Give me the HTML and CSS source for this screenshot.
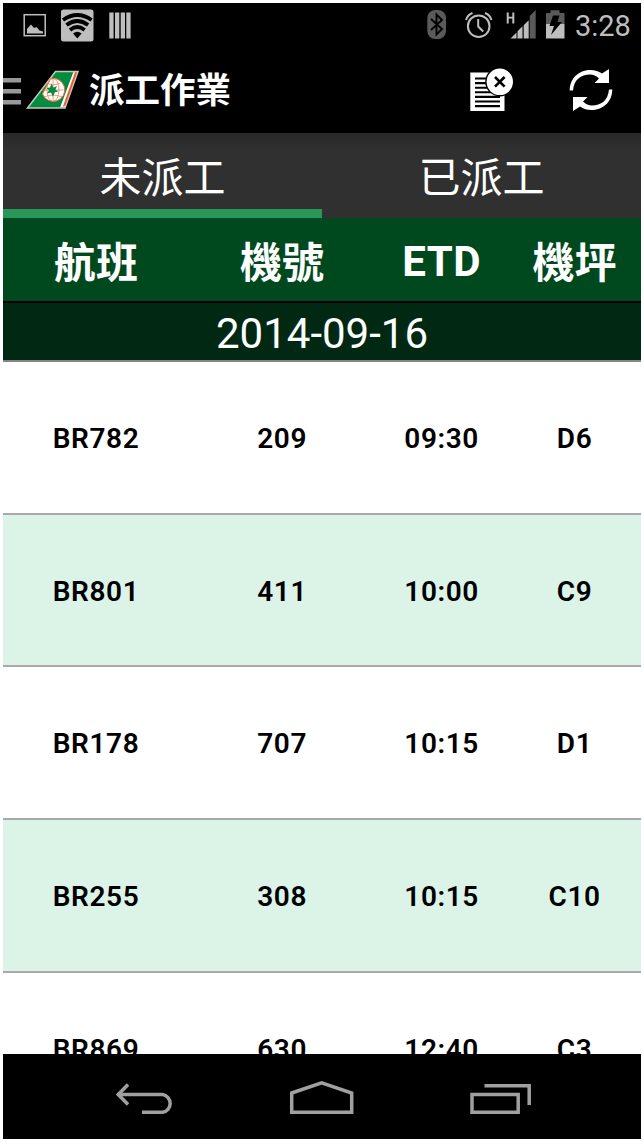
FILE: index.html
```html
<!DOCTYPE html>
<html lang="zh-Hant">
<head>
    <meta charset="UTF-8">
    <meta name="viewport" content="width=device-width, initial-scale=1.0">
    <title>派工作業</title>
    <link rel="stylesheet" href="styles.css">
</head>
<body>
    <div class="phone">
        <!-- Status bar -->
        <div class="status-bar">
            <svg class="status-left" width="140" height="45" viewBox="3 3 140 45">
                <rect x="24.2" y="14.7" width="21" height="21" fill="none" stroke="#bebebe" stroke-width="1.5"/>
                <path d="M27 33.500v-4.500l4-4.500 3 3.500 2.500-1 3 3.500 3.500 1v2z" fill="#bebebe"/>
                <rect x="61" y="9.500" width="32.500" height="32" rx="2.500" fill="#bebebe"/>
                <g fill="none" stroke="#000" stroke-width="3.800">
                    <path d="M63 20Q77.300 10 91.600 20"/>
                    <path d="M66.500 25Q77.300 17 88.100 25"/>
                    <path d="M70 29.900Q77.300 24 84.600 29.900"/>
                </g>
                <path d="M73 33.500Q77.300 30 81.600 33.500L77.300 38.500z"/>
                <path d="M109.300 12.500h4.300v26h-4.300zM115 12.500h4.300v26H115zM120.700 12.500h4.300v26h-4.300zM126.300 12.500h4.300v26h-4.300z" fill="#bebebe"/>
            </svg>
            <svg class="status-right" width="150" height="45" viewBox="422 3 150 45">
                <rect x="427.300" y="10" width="18.700" height="29" rx="8" fill="#5a5a5a"/>
                <path d="M431 19l11 10-5.500 5.500v-20l5.500 5.500-11 10" fill="none" stroke="#000" stroke-width="1.900"/>
                <g fill="none" stroke="#bebebe" stroke-width="2">
                    <circle cx="478.700" cy="26.200" r="10.800"/>
                    <path d="M478.200 19v7.500l5 5M466 20q1.500-5 6.500-7M485 13q5 2 6.500 7"/>
                </g>
                <path d="M506.700 12.500h2v4.300h3.600v-4.300h2v11h-2v-5h-3.600v5h-2z" fill="#bebebe"/>
                <path d="M510.500 38.500l6-6v6zM517.500 31.300l5-5v12.200h-5zM523.700 25.300l5-5v18.200h-5z" fill="#bebebe"/>
                <path d="M529.700 16l6-6v28.500h-6z" fill="#5a5a5a"/>
                <path d="M546 13h4.500v-2.700h9V13h5v11H546z" fill="#5a5a5a"/>
                <path d="M546 24h18.500v14.500H546z" fill="#bebebe"/>
                <path d="M553 15.500h6.500l-2 6.500h4.500l-11 13 3-9h-4.500z"/>
            </svg>
            <span class="clock">3:28</span>
        </div>

        <!-- Action bar -->
        <div class="action-bar">
            <svg class="brand" width="78" height="85" viewBox="3 48 78 85">
                <path d="M3 78h18v4.500H3zM3 89h18v4.500H3zM3 100h18v4.500H3z" fill="#999"/>
                <path d="M55.500 71.500H78L65 108H27.500z" fill="#008d42" stroke="#c7c7be" stroke-width="1.500"/>
                <path d="M73.300 72.300h4L64.500 107.300h-4.300z" fill="#fff"/>
                <path d="M75 72.300h2.200L65.500 105l-2.800 2.300z" fill="#ef5a2a"/>
                <path d="M50.500 78.700A11.500 11.500 0 1 1 42.500 94z" fill="#fff" stroke="#ef6c38"/>
                <g fill="none" stroke="#f0733f" stroke-width=".7">
                    <ellipse cx="53" cy="90" rx="6" ry="11.500"/>
                    <path d="M47 83.500q6 3 13 0M42 90h21.500M44 97q9-4 18 0M53 78.500v23"/>
                </g>
                <path d="M51.600 83.500l1.700 4 3.700-1.200-1.600 3.300 3 2-3.600.7-1.800 4.500-2-4.200-4 1 2-3.400-2.500-2.300 3.500-.3z" fill="#008d42"/>
            </svg>
            <h1>派工作業</h1>
            <svg class="actions" width="160" height="85" viewBox="461 48 160 85">
                <path d="M470.300 72.500H504.500V111h-34.200z" fill="#fff"/>
                <path d="M475 78.500h25M475 83.100h25M475 87.700h25M475 92.300h25M475 96.900h25M475 101.500h25M475 106.100h25" stroke="#000" stroke-width="2.100"/>
                <circle cx="499.800" cy="81.800" r="14.600"/>
                <circle cx="499.800" cy="81.800" r="13.200" fill="#fff"/>
                <path d="M495 77l9.600 9.600M504.600 77l-9.600 9.600" stroke="#000" stroke-width="2.600"/>
                <g id="sync-arrow" fill="#fff">
                    <path d="M569.700 90.500C570 77 580 70 590.500 70q6.500 0 11.500 3.500l7-4.500V83h-14.500l4.500-4.500q-4-4-9-4c-9 0-16 5-17 16z"/>
                </g>
                <use href="#sync-arrow" transform="rotate(180 591 90)"/>
            </svg>
        </div>

        <div class="tabs">
            <div class="tab active">未派工</div>
            <div class="tab">已派工</div>
        </div>

        <div class="columns table-head">
            <span>航班</span>
            <span>機號</span>
            <span class="latin">ETD</span>
            <span>機坪</span>
        </div>
        <div class="date">2014-09-16</div>

        <!-- Flight list -->
        <div class="list">
            <div class="columns flight"><span>BR782</span><span>209</span><span>09:30</span><span>D6</span></div>
            <div class="columns flight"><span>BR801</span><span>411</span><span>10:00</span><span>C9</span></div>
            <div class="columns flight"><span>BR178</span><span>707</span><span>10:15</span><span>D1</span></div>
            <div class="columns flight"><span>BR255</span><span>308</span><span>10:15</span><span>C10</span></div>
            <div class="columns flight"><span>BR869</span><span>630</span><span>12:40</span><span>C3</span></div>
        </div>

        <!-- Navigation bar -->
        <div class="nav-bar">
            <svg width="638" height="85" viewBox="3 1054 638 85" fill="none" stroke="#a0a0a0" stroke-width="3.500">
                <path d="M118 1094.500h44.500a9 9 0 0 1 0 17.800H142M128 1084.500l-9.800 10 9.800 10"/>
                <path d="M291.700 1093l30-10.200 30 10.200v19.300h-60z"/>
                <path d="M472 1094.500h46.200v17.800H472zM484.500 1085.700h44.700v19.300"/>
            </svg>
        </div>
    </div>
</body>
</html>
```

FILE: styles.css
```css
body {
    margin: 0;
    padding: 3px;
    background-color: #fff;
    font-family: Roboto, 'Noto Sans CJK TC', sans-serif;
}
svg {
    display: block;
}
.phone {
    width: 638px;
    height: 1136px;
    display: flex;
    flex-direction: column;
    overflow: hidden;
    background-color: #000;
}
.status-bar {
    height: 45px;
    flex: none;
    display: flex;
    align-items: center;
}
.status-right {
    margin-left: auto;
}
.clock {
    width: 66px;
    padding: 2px 0 0 3px;
    color: #bebebe;
    font-size: 29px;
    line-height: 45px;
}
.action-bar {
    height: 85px;
    flex: none;
    display: flex;
    align-items: center;
    color: #fff;
}
h1 {
    margin: 2px 0 0 8px;
    font-size: 35.5px;
    font-weight: bold;
    line-height: 85px;
}
.actions {
    margin-left: auto;
    margin-right: 20px;
}
.tabs {
    height: 85px;
    flex: none;
    display: flex;
    background: linear-gradient(#292929, #303030 18px);
}
.tab {
    flex: 1;
    box-sizing: border-box;
    height: 85px;
    border-bottom: 9px solid transparent;
    color: #fff;
    font-size: 42px;
    line-height: 92px;
    text-align: center;
}
.tab.active {
    border-bottom-color: #279858;
}
.columns {
    display: grid;
    grid-template-columns: 7fr 7fr 5fr 5fr;
    text-align: center;
    font-weight: bold;
}
.table-head {
    height: 83px;
    flex: none;
    border-bottom: 2px solid #000;
    background-color: #00491f;
    color: #fff;
    font-size: 42px;
    line-height: 91px;
}
.table-head .latin {
    line-height: 88px;
    letter-spacing: 0.5px;
}
.date {
    height: 57px;
    flex: none;
    background-color: #002812;
    border-bottom: 2px solid #858585;
    color: #fff;
    font-size: 42px;
    line-height: 62px;
    text-align: center;
}
.list {
    flex: 1;
    min-height: 0;
    overflow: hidden;
    background-color: #fff;
}
.flight {
    box-sizing: border-box;
    height: 152.67px;
    border-bottom: 2px solid #a9a9a9;
    color: #000;
    font-size: 28px;
    font-weight: 600;
    letter-spacing: 0.6px;
    line-height: 153px;
}
.flight:nth-child(even) {
    background-color: #dcf4e8;
}
.nav-bar {
    height: 85px;
    flex: none;
}
```
